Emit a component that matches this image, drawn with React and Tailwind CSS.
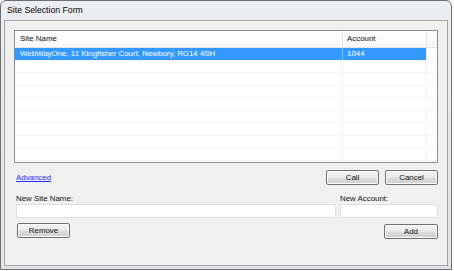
import React from "react";

const rows = [
  { name: "WebWayOne, 11 Kingfisher Court, Newbury, RG14 4SH", account: "1044", selected: true },
  {}, {}, {}, {}, {}, {}, {}, {},
];

const Button = ({ children, className = "" }) => (
  <button
    className={`h-[15px] w-[53px] rounded-[2px] border border-[#707070] bg-[linear-gradient(to_bottom,#f2f2f2_0%,#ebebeb_48%,#dddddd_52%,#cfcfcf_100%)] shadow-[inset_0_0_0_1px_#fafafa] flex items-center justify-center text-[7.9px] text-[#111] leading-none ${className}`}
  >
    {children}
  </button>
);

export default function App() {
  return (
    <div className="w-[454px] h-[271px] bg-white font-['Liberation_Sans',Arial,sans-serif]">
      <div className="w-[452px] h-[270px] rounded-t-[6px] border border-[#6f6f6f] bg-[linear-gradient(to_bottom,#eceef1,#e1e4e8)] flex flex-col px-[3px] pb-[3px]">
        {/* title bar */}
        <div className="h-[19px] flex items-center pl-[3px] text-[8.7px] text-black">
          Site Selection Form
        </div>

        {/* client area */}
        <div className="flex-1 border border-[#a3a3a3] bg-[#f0f0f0] flex flex-col px-[9px] pt-[9px] text-[7.9px] text-[#111]">
          {/* list view */}
          <div className="h-[133px] border border-[#8a8f96] bg-white flex flex-col overflow-hidden">
            <div className="h-[17px] shrink-0 flex border-b border-[#e5e5e5] bg-[linear-gradient(to_bottom,#ffffff,#f7f8f9)]">
              <div className="w-[328px] border-r border-[#e3e5e7] flex items-center pl-[5px]">Site Name</div>
              <div className="w-[84px] border-r border-[#e3e5e7] flex items-center pl-[4px]">Account</div>
              <div className="flex-1" />
            </div>
            {rows.map((r, i) => (
              <div key={i} className="h-[12.5px] shrink-0 flex border-b border-[#f3f3f3]">
                <div
                  className={`w-[328px] border-r flex items-center pl-[5px] ${
                    r.selected ? "bg-[#3399ff] text-white border-[#7fbcff]" : "border-[#f1f1f1]"
                  }`}
                >
                  {r.name}
                </div>
                <div
                  className={`w-[84px] border-r flex items-center pl-[4px] ${
                    r.selected ? "bg-[#3399ff] text-white border-[#f1f1f1]" : "border-[#f1f1f1]"
                  }`}
                >
                  {r.account}
                </div>
                <div className="flex-1" />
              </div>
            ))}
          </div>

          {/* advanced + call/cancel */}
          <div className="mt-[7px] flex items-center">
            <a className="ml-[2px] text-[#2a2aff] underline">Advanced</a>
            <div className="ml-auto flex gap-[6px]">
              <Button>Call</Button>
              <Button>Cancel</Button>
            </div>
          </div>

          {/* new site inputs */}
          <div className="mt-[8px] grid grid-cols-[1fr_98px] gap-x-[4px]">
            <div className="ml-[2px] h-[11px] flex items-center">New Site Name:</div>
            <div className="h-[11px] flex items-center">New Account:</div>
            <div className="ml-[2px] h-[14px] border border-[#e0e0e0] bg-white" />
            <div className="h-[14px] border border-[#e0e0e0] bg-white" />
          </div>

          {/* remove / add */}
          <div className="mt-[5px] flex items-start justify-between">
            <Button className="ml-[3px] w-[52px]">Remove</Button>
            <Button className="mt-[1px] w-[54px]">Add</Button>
          </div>
        </div>
      </div>
    </div>
  );
}
